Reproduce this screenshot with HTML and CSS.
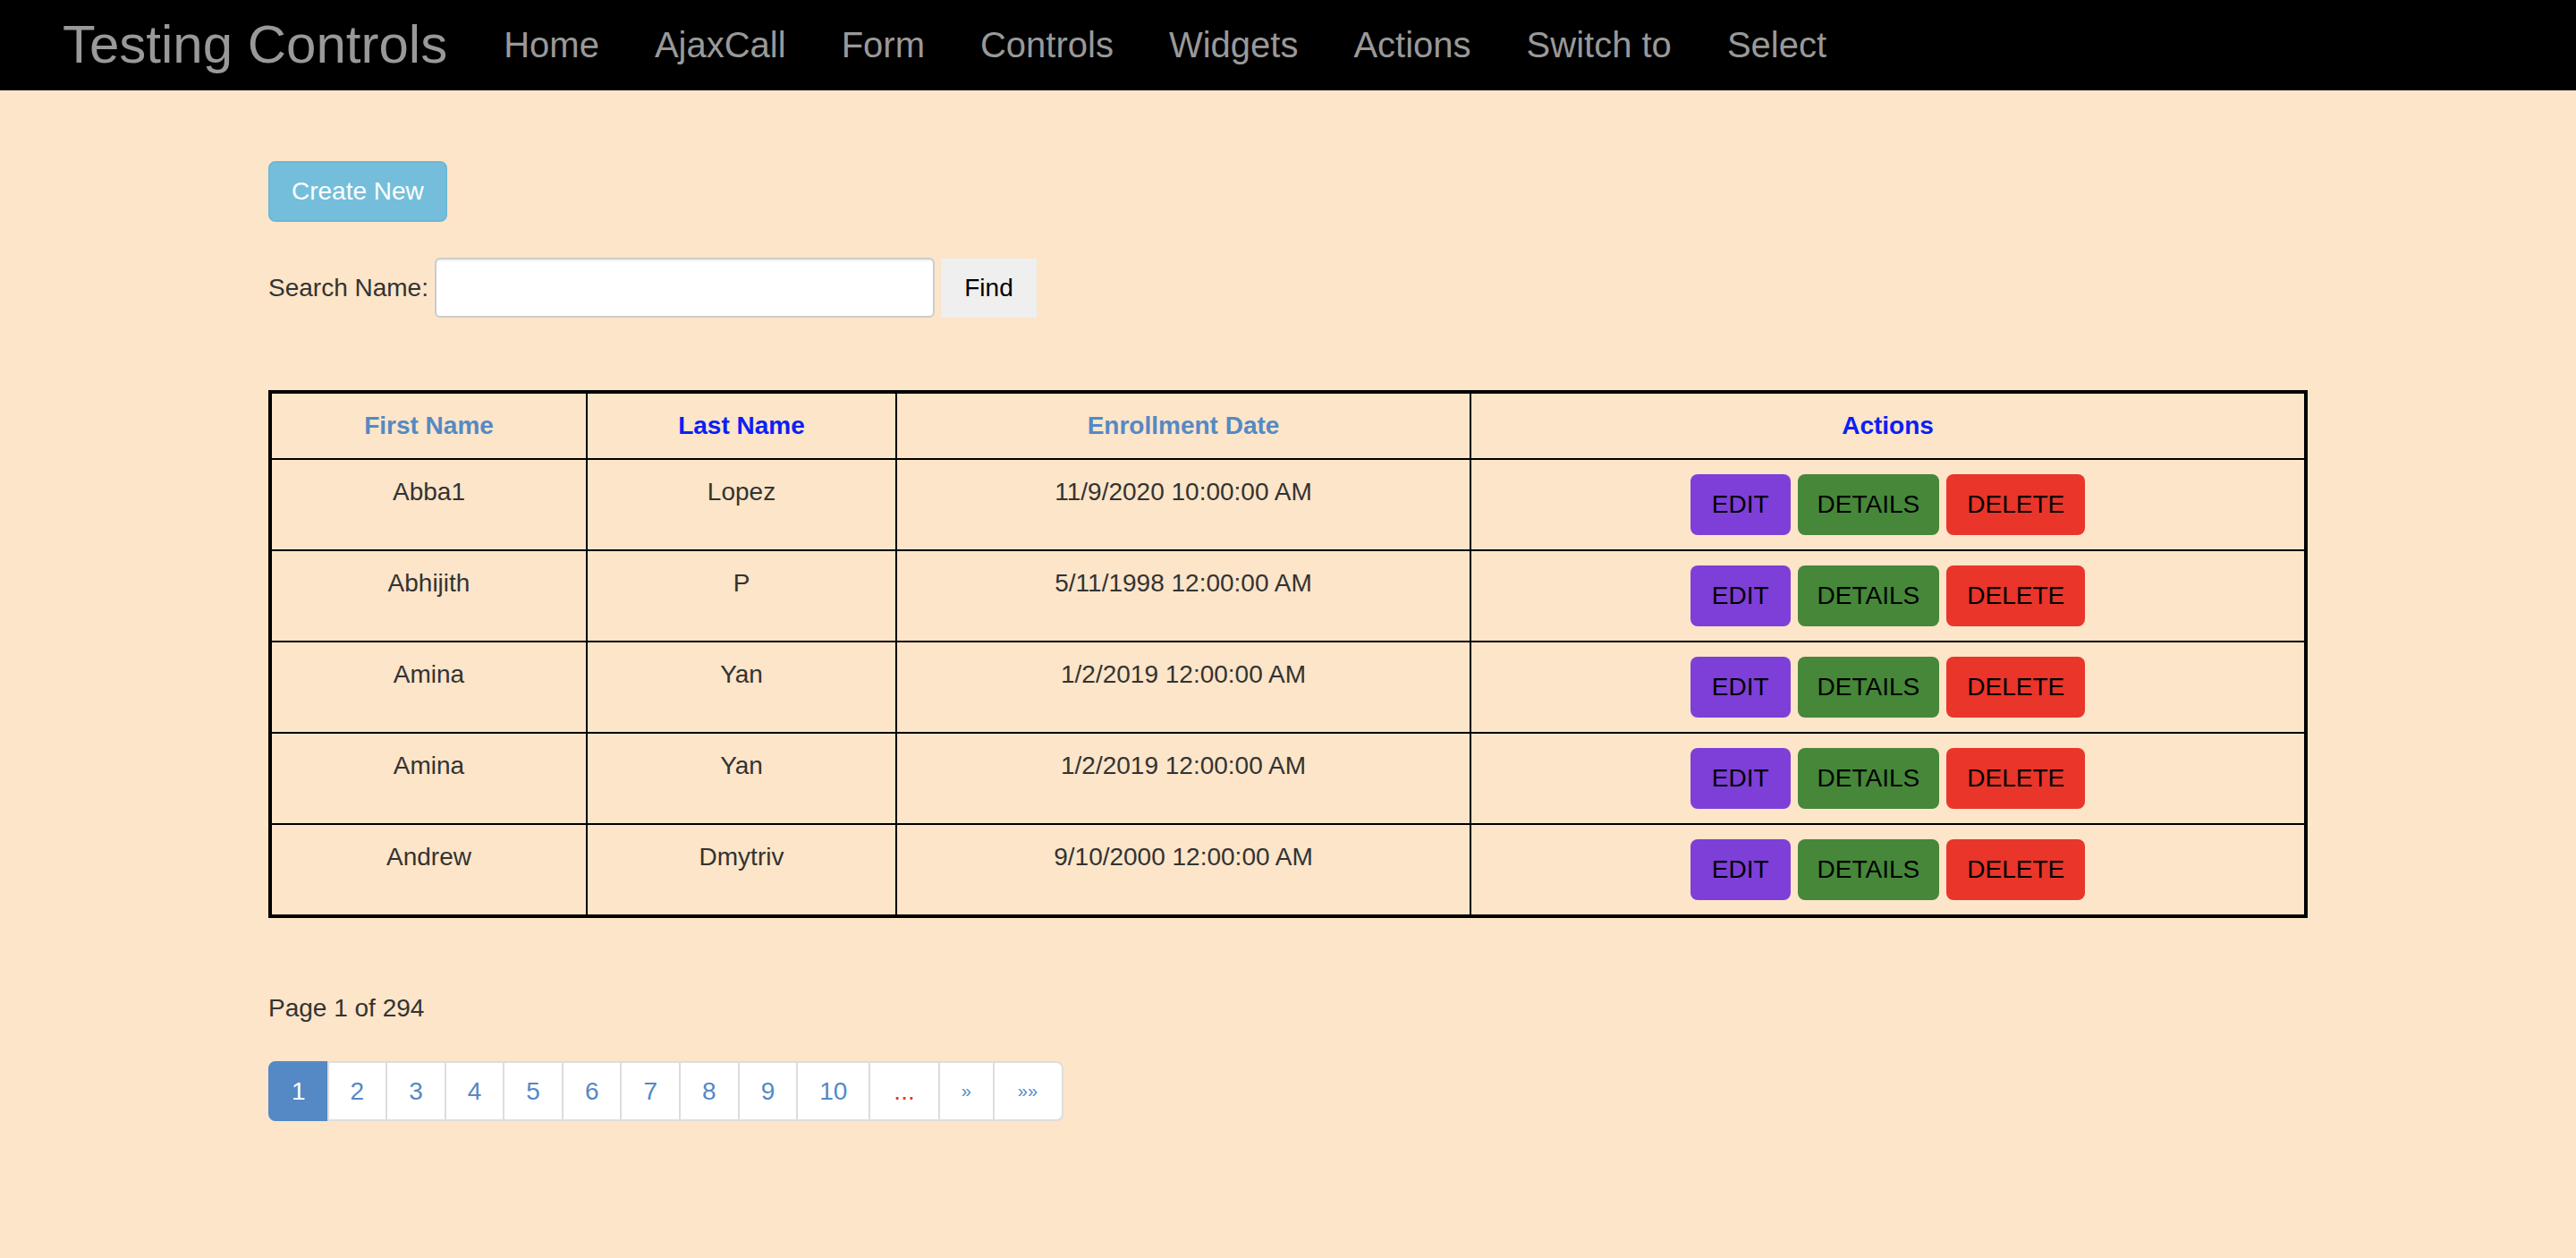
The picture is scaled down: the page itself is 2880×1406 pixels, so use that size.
FILE: index.html
```html
<!DOCTYPE html>
<html>
<head>
<meta charset="utf-8">
<title>Testing Controls</title>
<link rel="stylesheet" href="styles.css">
</head>
<body>
<nav class="navbar">
  <a class="brand" href="#">Testing Controls</a>
  <ul class="nav-links">
    <li><a href="#">Home</a></li>
    <li><a href="#">AjaxCall</a></li>
    <li><a href="#">Form</a></li>
    <li><a href="#">Controls</a></li>
    <li><a href="#">Widgets</a></li>
    <li><a href="#">Actions</a></li>
    <li><a href="#">Switch to</a></li>
    <li><a href="#">Select</a></li>
  </ul>
</nav>
<main class="container">
  <div class="create-row"><a class="btn-create" href="#">Create New</a></div>
  <form class="search-row">
    <label class="search-label">Search Name:</label>
    <input class="search-input" type="text">
    <button class="find-btn" type="button">Find</button>
  </form>
  <table class="grid">
    <thead>
      <tr>
        <th class="c1"><a class="hl-soft" href="#">First Name</a></th>
        <th class="c2"><span class="hl-strong">Last Name</span></th>
        <th class="c3"><a class="hl-soft" href="#">Enrollment Date</a></th>
        <th class="c4"><span class="hl-strong">Actions</span></th>
      </tr>
    </thead>
    <tbody>
      <tr>
        <td>Abba1</td><td>Lopez</td><td>11/9/2020 10:00:00 AM</td>
        <td><div class="acts"><a class="act edit" href="#">EDIT</a><a class="act details" href="#">DETAILS</a><a class="act delete" href="#">DELETE</a></div></td>
      </tr>
      <tr>
        <td>Abhijith</td><td>P</td><td>5/11/1998 12:00:00 AM</td>
        <td><div class="acts"><a class="act edit" href="#">EDIT</a><a class="act details" href="#">DETAILS</a><a class="act delete" href="#">DELETE</a></div></td>
      </tr>
      <tr>
        <td>Amina</td><td>Yan</td><td>1/2/2019 12:00:00 AM</td>
        <td><div class="acts"><a class="act edit" href="#">EDIT</a><a class="act details" href="#">DETAILS</a><a class="act delete" href="#">DELETE</a></div></td>
      </tr>
      <tr>
        <td>Amina</td><td>Yan</td><td>1/2/2019 12:00:00 AM</td>
        <td><div class="acts"><a class="act edit" href="#">EDIT</a><a class="act details" href="#">DETAILS</a><a class="act delete" href="#">DELETE</a></div></td>
      </tr>
      <tr>
        <td>Andrew</td><td>Dmytriv</td><td>9/10/2000 12:00:00 AM</td>
        <td><div class="acts"><a class="act edit" href="#">EDIT</a><a class="act details" href="#">DETAILS</a><a class="act delete" href="#">DELETE</a></div></td>
      </tr>
    </tbody>
  </table>
  <p class="page-info">Page 1 of 294</p>
  <ul class="pagination">
    <li class="active"><a href="#">1</a></li>
    <li><a href="#">2</a></li>
    <li><a href="#">3</a></li>
    <li><a href="#">4</a></li>
    <li><a href="#">5</a></li>
    <li><a href="#">6</a></li>
    <li><a href="#">7</a></li>
    <li><a href="#">8</a></li>
    <li><a href="#">9</a></li>
    <li><a href="#">10</a></li>
    <li class="dots"><a href="#">...</a></li>
    <li class="arrow"><a href="#">»</a></li>
    <li class="arrow last"><a href="#">»»</a></li>
  </ul>
</main>
</body>
</html>
```
FILE: styles.css
```css
* { box-sizing: border-box; }
html, body {
  margin: 0;
  padding: 0;
}
body {
  background: #fce5c8;
  font-family: "Liberation Sans", Arial, Helvetica, sans-serif;
  font-size: 28px;
  line-height: 40px;
  color: #333;
}
a { text-decoration: none; }

/* navbar */
.navbar {
  background: #000;
  height: 101px;
  display: flex;
  align-items: flex-start;
  padding-left: 70px;
}
.brand {
  font-size: 60px;
  line-height: 60px;
  padding-top: 20px;
  padding-right: 32px;
  color: #999;
  white-space: nowrap;
}
.nav-links {
  list-style: none;
  margin: 0;
  padding: 0;
  display: flex;
}
.nav-links a {
  display: block;
  font-size: 40px;
  line-height: 40px;
  padding: 30px 31px 0 31px;
  color: #999;
  white-space: nowrap;
}

/* container */
.container {
  width: 2280px;
  margin: 0 auto;
  padding-top: 79px;
}
.create-row {
  display: flex;
  margin-bottom: 40px;
}
.btn-create {
  display: block;
  background: #74bedb;
  border: 2px solid #6bb8d6;
  border-radius: 8px;
  color: #fff;
  padding: 12px 24px;
  font-size: 28px;
  line-height: 40px;
}

.search-row {
  display: flex;
  align-items: center;
  gap: 7px;
  margin: 0 0 81px 0;
}
.search-label {
  font-size: 28px;
  color: #333;
}
.search-input {
  width: 559px;
  height: 67px;
  border: 2px solid #cccccc;
  border-radius: 6px;
  background: #fff;
  box-shadow: inset 0 2px 2px rgba(0,0,0,0.06);
  font-size: 28px;
  padding: 0 12px;
}
.find-btn {
  height: 66px;
  width: 107px;
  background: #efefef;
  border: none;
  border-radius: 0;
  font-family: "Liberation Sans", Arial, sans-serif;
  font-size: 28px;
  color: #000;
  padding: 0;
  margin-top: 1px;
}

/* table */
.grid {
  width: 2280px;
  table-layout: fixed;
  border-collapse: separate;
  border-spacing: 0;
  border: 4px solid #000;
  margin-bottom: 81px;
}
.grid th, .grid td {
  border-right: 2px solid #000;
  border-bottom: 2px solid #000;
  padding: 16px;
  text-align: center;
  vertical-align: top;
  font-size: 28px;
  line-height: 40px;
}
.grid th:last-child, .grid td:last-child { border-right: none; }
.grid tbody tr:last-child td { border-bottom: none; }
.grid th { font-weight: bold; }
.c1 { width: 353px; }
.c2 { width: 346px; }
.c3 { width: 642px; }
.c4 { width: 931px; }
.hl-soft { color: #5489c5; }
.hl-strong { color: #0a20f5; }

.acts {
  display: flex;
  justify-content: center;
  gap: 8px;
}
.act {
  display: block;
  padding: 14px 24px;
  border-radius: 8px;
  color: #000;
  font-size: 28px;
  line-height: 40px;
}
.act.edit { background: #7e3fd8; }
.act.details { background: #46873a; padding: 14px 22px; }
.act.delete { background: #e9352a; padding: 14px 23px; }

/* pagination */
.page-info {
  margin: 0 0 39px 0;
  font-size: 28px;
  line-height: 40px;
}
.pagination {
  list-style: none;
  display: flex;
  margin: 0;
  padding: 0;
}
.pagination li a {
  display: block;
  margin-left: -2px;
  padding: 12px 24px;
  border: 2px solid #dddddd;
  background: #fff;
  color: #5489c5;
  font-size: 28px;
  line-height: 39px;
}
.pagination li:first-child a {
  margin-left: 0;
  border-radius: 8px 0 0 8px;
}
.pagination li.last a { border-radius: 0 8px 8px 0; padding: 12px 27px 12px 26px; }
.pagination li.active a {
  background: #5489c5;
  border-color: #5489c5;
  color: #fff;
}
.pagination li.dots a { color: #e9352a; padding: 12px 26px; }
.pagination li.arrow a { font-size: 20px; }
```
